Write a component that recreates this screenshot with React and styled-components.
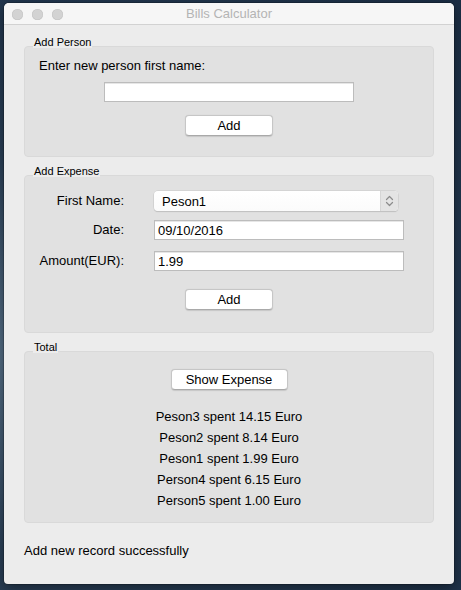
import React from 'react';
import styled, { createGlobalStyle } from 'styled-components';

const GlobalStyle = createGlobalStyle`
  html, body {
    margin: 0;
    padding: 0;
  }
  body {
    width: 461px;
    height: 590px;
    overflow: hidden;
    background: radial-gradient(ellipse at 5% 60%, #58728a 0%, #2a4058 40%, #1b2e45 100%);
    font-family: "Liberation Sans", Arial, sans-serif;
    font-size: 13px;
    color: #000;
  }
`;

const Desktop = styled.div`
  padding: 3px 7px 6px 4px;
`;

const Window = styled.div`
  width: 450px;
  height: 581px;
  background: #ececec;
  border-radius: 5px 5px 4px 4px;
  box-shadow: 0 0 0 1px rgba(0, 0, 0, 0.18), 0 4px 14px rgba(0, 0, 0, 0.45);
  display: flex;
  flex-direction: column;
  overflow: hidden;
`;

const TitleBar = styled.div`
  height: 21px;
  flex-shrink: 0;
  background: #f6f6f6;
  border-bottom: 1px solid #d2d2d2;
  display: flex;
  align-items: center;
  position: relative;
  padding-left: 8px;
`;

const Lights = styled.div`
  display: flex;
  gap: 9px;
  margin-top: 1px;
`;

const Light = styled.span`
  width: 11px;
  height: 11px;
  border-radius: 50%;
  background: #d3d3d3;
  box-shadow: inset 0 0 0 0.5px #c3c3c3;
`;

const WindowTitle = styled.div`
  position: absolute;
  left: 0;
  right: 0;
  top: 3px;
  text-align: center;
  color: #b4b4b4;
  font-size: 13px;
  pointer-events: none;
`;

const Content = styled.div`
  padding: 0 20px;
  display: flex;
  flex-direction: column;
`;

const GroupTitle = styled.div`
  position: relative;
  z-index: 1;
  align-self: flex-start;
  margin: ${(p) => p.$top}px 0 0 9px;
  padding: 0 1px;
  background: #ececec;
  font-size: 11px;
  line-height: 11px;
  height: 11px;
`;

const GroupBox = styled.div`
  margin-top: -2px;
  background: #e1e1e1;
  border: 1px solid #d9d9d9;
  border-radius: 4px;
  padding: ${(p) => p.$pad};
  display: flex;
  flex-direction: column;
`;

const Prompt = styled.div`
  line-height: 16px;
  padding-left: 14px;
`;

const TextInput = styled.div`
  width: ${(p) => p.$w}px;
  height: 20px;
  box-sizing: border-box;
  background: #fff;
  border: 1px solid #bcbcbc;
  box-shadow: inset 0 1px 0 #e6e6e6;
  padding-left: 3px;
  line-height: 19px;
  font-size: 13px;
`;

const CenterRow = styled.div`
  display: flex;
  justify-content: center;
  margin-top: ${(p) => p.$top || 0}px;
`;

const Button = styled.button`
  width: ${(p) => p.$w}px;
  height: 21px;
  box-sizing: border-box;
  background: #fff;
  border: 1px solid #c6c6c6;
  border-bottom-color: #a9a9a9;
  border-radius: 4px;
  box-shadow: 0 0.5px 1px rgba(0, 0, 0, 0.12);
  font-family: "Liberation Sans", Arial, sans-serif;
  font-size: 13px;
  color: #000;
  padding: 0;
  line-height: 18px;
`;

const FormRow = styled.div`
  display: grid;
  grid-template-columns: 85px auto;
  column-gap: 30px;
  align-items: center;
  height: 20px;
  padding-left: 14px;
  margin-top: ${(p) => p.$top || 0}px;
`;

const FieldLabel = styled.div`
  text-align: right;
  line-height: 16px;
`;

const Combo = styled.div`
  width: 244px;
  height: 20px;
  box-sizing: border-box;
  background: linear-gradient(#ffffff, #fbfbfb);
  border-radius: 4px;
  box-shadow: 0 0 0 0.5px #c8c8c8, 0 1px 1px rgba(0, 0, 0, 0.18);
  display: flex;
  align-items: center;
  overflow: hidden;
`;

const ComboText = styled.span`
  flex: 1;
  padding-left: 8px;
`;

const Stepper = styled.span`
  width: 17px;
  height: 100%;
  background: #e4e4e4;
  border-left: 1px solid #d6d6d6;
  display: flex;
  align-items: center;
  justify-content: center;
`;

const Results = styled.div`
  margin-top: 16px;
  display: flex;
  flex-direction: column;
  align-items: center;
`;

const ResultLine = styled.div`
  line-height: 21px;
`;

const Status = styled.div`
  margin-top: 20px;
  line-height: 16px;
`;

const totals = [
  'Peson3 spent 14.15 Euro',
  'Peson2 spent 8.14 Euro',
  'Peson1 spent 1.99 Euro',
  'Person4 spent 6.15 Euro',
  'Person5 spent 1.00 Euro',
];

const App = () => (
  <>
    <GlobalStyle />
    <Desktop>
      <Window>
        <TitleBar>
          <Lights>
            <Light />
            <Light />
            <Light />
          </Lights>
          <WindowTitle>Bills Calculator</WindowTitle>
        </TitleBar>
        <Content>
          <GroupTitle $top={12}>Add Person</GroupTitle>
          <GroupBox $pad="11px 0 20px 0">
            <Prompt>Enter new person first name:</Prompt>
            <CenterRow $top={8}>
              <TextInput $w={250} />
            </CenterRow>
            <CenterRow $top={13}>
              <Button $w={88}>Add</Button>
            </CenterRow>
          </GroupBox>

          <GroupTitle $top={9}>Add Expense</GroupTitle>
          <GroupBox $pad="15px 0 22px 0">
            <FormRow>
              <FieldLabel>First Name:</FieldLabel>
              <Combo>
                <ComboText>Peson1</ComboText>
                <Stepper>
                  <svg width="9" height="12" viewBox="0 0 9 12" fill="none" stroke="#8c8c8c" strokeWidth="1.2" strokeLinecap="round" strokeLinejoin="round">
                    <path d="M1.5 4.5 L4.5 1.5 L7.5 4.5" />
                    <path d="M1.5 7.5 L4.5 10.5 L7.5 7.5" />
                  </svg>
                </Stepper>
              </Combo>
            </FormRow>
            <FormRow $top={9}>
              <FieldLabel>Date:</FieldLabel>
              <TextInput $w={250}>09/10/2016</TextInput>
            </FormRow>
            <FormRow $top={11}>
              <FieldLabel>Amount(EUR):</FieldLabel>
              <TextInput $w={250}>1.99</TextInput>
            </FormRow>
            <CenterRow $top={18}>
              <Button $w={88}>Add</Button>
            </CenterRow>
          </GroupBox>

          <GroupTitle $top={9}>Total</GroupTitle>
          <GroupBox $pad="17px 0 11px 0">
            <CenterRow>
              <Button $w={117}>Show Expense</Button>
            </CenterRow>
            <Results>
              {totals.map((t) => (
                <ResultLine key={t}>{t}</ResultLine>
              ))}
            </Results>
          </GroupBox>

          <Status>Add new record successfully</Status>
        </Content>
      </Window>
    </Desktop>
  </>
);

export default App;
